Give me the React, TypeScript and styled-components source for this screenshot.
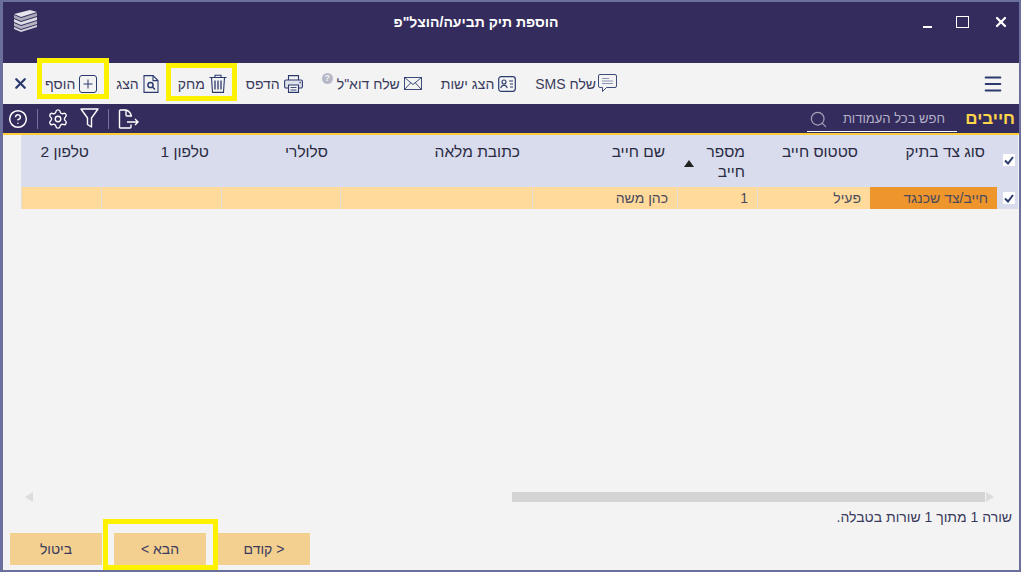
import styled, { createGlobalStyle } from "styled-components";
import { CircleHelp, Menu, Search, Settings, X } from "lucide-react";

const navy = "#2b3a6e";
const dark = "#352c5e";

const Global = createGlobalStyle`
  html, body { margin: 0; padding: 0; background: #f3f3f3; }
  body { font-family: "Liberation Sans", Arial, sans-serif; }
  #root { width: 1021px; height: 572px; overflow: hidden; }
  * { box-sizing: border-box; }
`;

const columns = [
  { title: "סוג צד בתיק", width: 127, value: "חייב/צד שכנגד", accent: true },
  { title: "סטטוס חייב", width: 113, value: "פעיל" },
  { title: "מספר חייב", width: 80, value: "1", sorted: true },
  { title: "שם חייב", width: 145, value: "כהן משה" },
  { title: "כתובת מלאה", width: 192, value: "" },
  { title: "סלולרי", width: 119, value: "" },
  { title: "טלפון 1", width: 120, value: "" },
  { title: "טלפון 2", width: 80, value: "" },
];
const gridTemplate = `21px ${columns.map((c) => c.width + "px").join(" ")}`;

function LogoIcon() {
  return (
    <svg width="25" height="23" viewBox="0 0 25 23">
      <path d="M1 5 L17 1 L24 3 L8 8 Z" fill="#e4e4ea" />
      <path d="M1 6 L8 9 L24 4 V7 L8 12 L1 9 Z" fill="#a9a9b8" />
      <path d="M1 10 L8 13 L24 8 V11 L8 16 L1 13 Z" fill="#dcdce4" />
      <path d="M1 14 L8 17 L24 12 V15 L8 20 L1 17 Z" fill="#b4b4c2" />
      <path d="M1 18 L8 21 L24 16 V18 L8 23 L1 20 Z" fill="#d2d2dc" />
    </svg>
  );
}

function PlusBox() {
  return (
    <svg width="18" height="18" viewBox="0 0 18 18" fill="none" stroke={navy} strokeWidth="1">
      <rect x="0.5" y="0.5" width="17" height="17" rx="2.5" />
      <path d="M9 4.500v9M4.500 9h9" />
    </svg>
  );
}

function PreviewIcon() {
  return (
    <svg width="16" height="18" viewBox="0 0 16 18" fill="none" stroke={navy} strokeWidth="1.1">
      <path d="M1 .6h9l5 5v11.800H1z" />
      <path d="M10 .6v5h5" />
      <circle cx="7.500" cy="10" r="2.600" strokeWidth="1.500" />
      <path d="M9.500 12l2.500 2.500" strokeWidth="1.500" />
    </svg>
  );
}

function TrashIcon() {
  return (
    <svg width="18" height="19" viewBox="0 0 18 19" fill="none" stroke={navy} strokeWidth="1.1">
      <path d="M.5 3.500h17M6 3.500V1.200h6v2.300" />
      <path d="M2.500 3.500l1 14.900h11l1-14.900" />
      <path d="M6 6.500v9M9 6.500v9M12 6.500v9" strokeWidth="1.300" />
    </svg>
  );
}

function PrinterIcon() {
  return (
    <svg width="19" height="18" viewBox="0 0 19 18" fill="none" stroke={navy} strokeWidth="1.1">
      <path d="M4.500 5V.6h10V5" />
      <path d="M4.500 13H2a1.400 1.400 0 0 1-1.400-1.400V6.400A1.400 1.400 0 0 1 2 5h15a1.400 1.400 0 0 1 1.400 1.400v5.200A1.400 1.400 0 0 1 17 13h-2.500" fill="#dfe2ec" />
      <path d="M4.500 10h10v7.400h-10z" fill="#f3f3f3" />
      <path d="M6.500 12.500h6M6.500 15h6" strokeWidth="0.9" />
      <path d="M15.500 7.500h1.200" strokeWidth="1.300" />
    </svg>
  );
}

function MailIcon() {
  return (
    <svg width="18" height="13" viewBox="0 0 18 13" fill="none" stroke={navy} strokeWidth="0.9">
      <rect x="0.5" y="0.5" width="17" height="12" />
      <path d="M.5.5 9 7.500l8.500-7M.5 12.500 6.800 5.700M17.500 12.500l-6.300-6.800" />
    </svg>
  );
}

function IdCardIcon() {
  return (
    <svg width="18" height="16" viewBox="0 0 18 16" fill="none" stroke={navy}>
      <rect x="0.7" y="0.7" width="16.600" height="14.600" rx="2.500" strokeWidth="1.200" />
      <circle cx="6" cy="6" r="2" strokeWidth="1.100" />
      <path d="M2.800 12.200c.4-2.400 1.600-3 3.200-3s2.800.6 3.200 3" strokeWidth="1.100" />
      <path d="M11 5h4M12 8h3M12 11h3" strokeWidth="1.200" />
    </svg>
  );
}

function SmsIcon() {
  return (
    <svg width="19" height="19" viewBox="0 0 19 19" fill="none">
      <path d="M2 .5h15a1.500 1.500 0 0 1 1.500 1.500v10a1.500 1.500 0 0 1-1.500 1.500H8.500L4.500 17.500v-4H2A1.500 1.500 0 0 1 .5 12V2A1.500 1.500 0 0 1 2 .5z" stroke={navy} strokeWidth="0.9" />
      <path d="M4 4.500h7M4 7h11M4 9.500h11" stroke="#8d94b4" strokeWidth="1.200" />
    </svg>
  );
}

function ExportIcon() {
  return (
    <svg width="21" height="20" viewBox="0 0 21 20" fill="none" stroke="#fff" strokeWidth="1.400">
      <path d="M13 15.500V18a1 1 0 0 1-1 1H2.500a1 1 0 0 1-1-1V2a1 1 0 0 1 1-1H8c3 1 5 3 5.500 6.500" />
      <path d="M8 1v5a1 1 0 0 0 1 1h4.500" />
      <path d="M9 13h11M17 10l3 3-3 3" />
    </svg>
  );
}

function Check() {
  return (
    <svg width="10" height="9" viewBox="0 0 10 9" fill="none" stroke={navy} strokeWidth="2">
      <path d="M1 4.500 4 7.500 9 1" />
    </svg>
  );
}

export default function App() {
  return (
    <>
      <Global />
      <Window dir="rtl">
        <TitleBar>
          <WindowControls>
            <X size={16} strokeWidth={3.4} color="#fff" />
            <MaxBox />
            <MinBar />
          </WindowControls>
          <Title>הוספת תיק תביעה/הוצל"פ</Title>
          <LogoSlot>
            <LogoIcon />
          </LogoSlot>
        </TitleBar>

        <Toolbar>
          <Menu size={22} strokeWidth={2.2} color={navy} />
          <Actions>
            <ToolButton $tight>
              <SmsIcon />
              <span>שלח SMS</span>
            </ToolButton>
            <ToolButton>
              <IdCardIcon />
              <span>הצג ישות</span>
            </ToolButton>
            <ToolButton>
              <MailIcon />
              <span>שלח דוא"ל</span>
              <HintDot>?</HintDot>
            </ToolButton>
            <ToolButton>
              <PrinterIcon />
              <span>הדפס</span>
            </ToolButton>
            <ToolButton $frame="delete">
              <TrashIcon />
              <span>מחק</span>
            </ToolButton>
            <ToolButton>
              <PreviewIcon />
              <span>הצג</span>
            </ToolButton>
            <ToolButton $frame="add">
              <PlusBox />
              <span>הוסף</span>
            </ToolButton>
            <CloseIcon size={17} strokeWidth={3.2} color={navy} />
          </Actions>
        </Toolbar>

        <FilterBar>
          <SectionName>חייבים</SectionName>
          <SearchBox>
            <SearchText>חפש בכל העמודות</SearchText>
            <Search size={19} strokeWidth={1.500} color="#a5a3b9" />
          </SearchBox>
          <FilterTools>
            <ExportIcon />
            <Divider />
            <FunnelIcon width="19" height="21" viewBox="0 0 19 21">
              <path d="M1 1h17l-6.500 9v9l-4-2.500V10z" />
            </FunnelIcon>
            <Settings size={22} strokeWidth={1.500} color="#fff" />
            <Divider />
            <CircleHelp size={20} strokeWidth={1.800} color="#fff" />
          </FilterTools>
        </FilterBar>

        <Content>
          <TableArea>
            <HeaderRow>
              <CheckCell>
                <CheckBox>
                  <Check />
                </CheckBox>
              </CheckCell>
              {columns.map((c) => (
                <HeaderCell key={c.title}>
                  {c.title}
                  {c.sorted && <SortArrow />}
                </HeaderCell>
              ))}
            </HeaderRow>
            <DataRow>
              <CheckCell>
                <CheckBox>
                  <Check />
                </CheckBox>
              </CheckCell>
              {columns.map((c) => (
                <DataCell key={c.title} $accent={c.accent}>
                  {c.value}
                </DataCell>
              ))}
            </DataRow>
          </TableArea>

          <ScrollTrack>
            <ArrowRight />
            <ScrollThumb />
            <ArrowLeft />
          </ScrollTrack>

          <RowCount>שורה 1 מתוך 1 שורות בטבלה.</RowCount>

          <Footer>
            <WizardButton>&lt; קודם</WizardButton>
            <WizardButton $framed>הבא &gt;</WizardButton>
            <WizardButton>ביטול</WizardButton>
          </Footer>
        </Content>
      </Window>
    </>
  );
}

const Window = styled.div`
  width: 1021px;
  height: 572px;
  display: flex;
  flex-direction: column;
  background: #f3f3f3;
  border: 2px solid #6b6f9b;
  border-width: 2px 2px 2px 3px;
  color: #3a3a5e;
`;

const TitleBar = styled.div`
  height: 61px;
  flex-shrink: 0;
  display: flex;
  align-items: flex-start;
  background: ${dark};
  color: #fff;
`;

const WindowControls = styled.div`
  width: 98px;
  height: 29px;
  padding: 12px 10px 0 0;
  display: flex;
  align-items: flex-start;
  gap: 24px;
`;

const MaxBox = styled.span`
  width: 13px;
  height: 12px;
  margin-top: 2px;
  border: 1.500px solid #fff;
`;

const MinBar = styled.span`
  width: 9px;
  height: 2px;
  margin-top: 12px;
  background: #fff;
`;

const Title = styled.div`
  flex: 1;
  padding: 11px 6px 0 0;
  text-align: center;
  font-size: 14px;
  font-weight: 700;
  line-height: 18px;
`;

const LogoSlot = styled.div`
  width: 34px;
  padding: 7px 0 0 10px;
  direction: ltr;
`;

const Toolbar = styled.div`
  height: 41px;
  flex-shrink: 0;
  display: flex;
  align-items: center;
  justify-content: space-between;
  padding: 0 15px 0 9px;
  background: #f3f3f3;
  border-radius: 0 4px 4px 0;
`;

const Actions = styled.div`
  display: flex;
  align-items: center;
  gap: 19px;
`;

const CloseIcon = styled(X)`
  margin-right: -3px;
`;

const ToolButton = styled.div<{ $frame?: "add" | "delete"; $tight?: boolean }>`
  position: relative;
  display: flex;
  align-items: center;
  gap: ${(p) => (p.$tight ? "2px" : "4px")};
  font-size: 14px;
  line-height: 18px;
  white-space: nowrap;

  ${(p) =>
    p.$frame &&
    `&::after {
      content: "";
      position: absolute;
      border: 5px solid #fff200;
      pointer-events: none;
      ${p.$frame === "add" ? "inset: -17px -12px -6px -8px;" : "inset: -11px -10px -8px -12px;"}
    }`}
`;

const HintDot = styled.span`
  width: 11px;
  height: 11px;
  margin: -10px 0 0 0;
  border-radius: 50%;
  background: #b6b8c8;
  color: #f3f3f3;
  font-size: 9px;
  font-weight: 700;
  line-height: 11px;
  text-align: center;
`;

const FilterBar = styled.div`
  height: 29px;
  flex-shrink: 0;
  display: flex;
  align-items: center;
  padding: 0 4px 0 5px;
  background: ${dark};
`;

const SectionName = styled.div`
  width: 48px;
  color: #ffd54a;
  font-size: 17px;
  font-weight: 700;
  line-height: 20px;
`;

const SearchBox = styled.div`
  width: 150px;
  height: 24px;
  margin: 2px 10px 0 0;
  display: flex;
  align-items: center;
  justify-content: space-between;
  padding: 0 12px 0 2px;
  border-bottom: 1px solid #fff;
`;

const SearchText = styled.span`
  color: #b4b2c6;
  font-size: 13px;
  line-height: 18px;
`;

const FilterTools = styled.div`
  margin-right: auto;
  display: flex;
  align-items: center;
  gap: 9px;
`;

const FunnelIcon = styled.svg`
  margin-left: 2px;
  fill: none;
  stroke: #fff;
  stroke-width: 1.4;
  stroke-linejoin: round;
`;

const Divider = styled.span`
  width: 1px;
  height: 20px;
  background: #77729a;
`;

const Content = styled.div`
  flex: 1;
  min-height: 0;
  display: flex;
  flex-direction: column;
  border-top: 2px solid #ffce3a;
`;

const TableArea = styled.div`
  height: 357px;
  flex-shrink: 0;
  padding: 0 1px 0 18px;
`;

const HeaderRow = styled.div`
  height: 52px;
  display: grid;
  grid-template-columns: ${gridTemplate};
  background: #d8dced;
`;

const DataRow = styled.div`
  height: 22px;
  display: grid;
  grid-template-columns: ${gridTemplate};
  background: #d8dced;
`;

const CheckCell = styled.div`
  padding: 5px 3px 0 0;
`;

const CheckBox = styled.span`
  width: 12px;
  height: 12px;
  margin-top: 14px;
  display: flex;
  align-items: center;
  justify-content: center;
  background: #fff;

  ${DataRow} & {
    margin-top: 0;
  }
`;

const HeaderCell = styled.div`
  position: relative;
  padding: 7px 12px 0 12px;
  color: #2a2a42;
  font-size: 15.500px;
  line-height: 20px;
`;

const SortArrow = styled.span`
  position: absolute;
  left: 7px;
  top: 25px;
  border-left: 5px solid transparent;
  border-right: 5px solid transparent;
  border-bottom: 7px solid #222;
`;

const DataCell = styled.div<{ $accent?: boolean }>`
  padding: 0 9px;
  background: ${(p) => (p.$accent ? "#ee952c" : "#ffda9a")};
  border-left: 1px solid ${(p) => (p.$accent ? "#ee952c" : "#e2ddd0")};
  color: #4a4a5e;
  font-size: 14px;
  line-height: 22px;
`;

const ScrollTrack = styled.div`
  height: 10px;
  flex-shrink: 0;
  display: flex;
  align-items: center;
  padding: 0 25px 0 22px;
`;

const ScrollThumb = styled.div`
  width: 473px;
  height: 10px;
  margin-left: auto;
  background: #d4d4d4;
`;

const ArrowRight = styled.span`
  margin-left: 1px;
  border-top: 5px solid transparent;
  border-bottom: 5px solid transparent;
  border-left: 8px solid #dcdcdc;
`;

const ArrowLeft = styled.span`
  border-top: 5px solid transparent;
  border-bottom: 5px solid transparent;
  border-right: 8px solid #dcdcdc;
`;

const RowCount = styled.div`
  height: 24px;
  flex-shrink: 0;
  padding: 6px 7px 0 0;
  font-size: 14px;
  line-height: 18px;
`;

const Footer = styled.div`
  margin-top: 7px;
  display: flex;
  justify-content: flex-end;
  gap: 12px;
  padding-left: 7px;
`;

const WizardButton = styled.div<{ $framed?: boolean }>`
  position: relative;
  width: 92px;
  height: 32px;
  display: flex;
  align-items: center;
  justify-content: center;
  background: #f3d08f;
  font-size: 14px;

  ${(p) =>
    p.$framed &&
    `&::after {
      content: "";
      position: absolute;
      inset: -14px -12px -5px -11px;
      border: 5px solid #fff200;
      pointer-events: none;
    }`}
`;
